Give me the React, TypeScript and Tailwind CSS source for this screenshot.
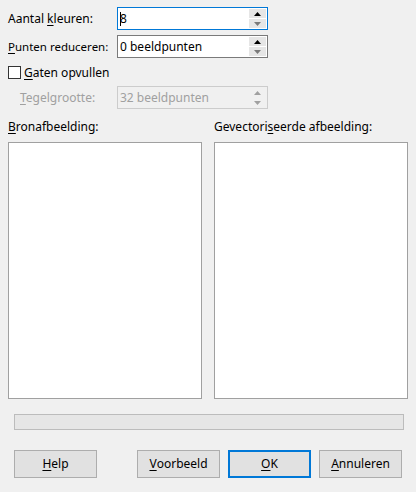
import React from 'react'

const font = { fontFamily: '"Noto Sans", "Open Sans", sans-serif' }

function U({ children }: { children: React.ReactNode }) {
  return <span className="underline underline-offset-2">{children}</span>
}

function Spin({ value, focused, disabled }: { value: React.ReactNode; focused?: boolean; disabled?: boolean }) {
  const border = focused ? 'border-[#0078d7]' : disabled ? 'border-[#cccccc]' : 'border-[#7a7a7a]'
  const arrow = disabled ? '#a0a0a0' : '#000000'
  return (
    <div className={`flex h-[23px] w-[151px] items-stretch border bg-white ${border}`}>
      <div className={`flex flex-1 items-center pl-[2px] text-[12px] ${disabled ? 'text-[#a0a0a0] bg-[#f0f0f0]' : 'text-black'}`}>
        {value}
      </div>
      <div className={`flex w-[18px] flex-col gap-[1px] py-[1px] pr-[1px] ${disabled ? 'bg-[#f0f0f0]' : ''}`}>
        <div className={`flex flex-1 items-center justify-center ${disabled ? 'bg-[#f0f0f0]' : 'bg-[#e6e6e6]'}`}>
          <svg width="7" height="4" viewBox="0 0 7 4"><path d="M0 4 L3.5 0 L7 4 Z" fill={arrow} /></svg>
        </div>
        <div className={`flex flex-1 items-center justify-center ${disabled ? 'bg-[#f0f0f0]' : 'bg-[#e6e6e6]'}`}>
          <svg width="7" height="4" viewBox="0 0 7 4"><path d="M0 0 L3.5 4 L7 0 Z" fill={disabled ? '#a0a0a0' : '#7a7a7a'} /></svg>
        </div>
      </div>
    </div>
  )
}

function Btn({ children, primary }: { children: React.ReactNode; primary?: boolean }) {
  return (
    <div
      className={`flex h-[28px] w-[83px] items-center justify-center bg-[#e1e1e1] text-[12px] text-black ${
        primary ? 'border-2 border-[#0078d7]' : 'border border-[#adadad]'
      }`}
    >
      {children}
    </div>
  )
}

export default function App() {
  return (
    <div className="flex h-[492px] w-[416px] flex-col bg-[#f0f0f0] text-[12px] text-black" style={font}>
      <div className="flex flex-col gap-[5px] pl-[8px] pt-[7px]">
        <div className="flex items-center">
          <span className="w-[109px]">Aantal <U>k</U>leuren:</span>
          <Spin
            focused
            value={
              <span className="flex items-center">
                <span className="mr-[-1px] h-[14px] w-[1px] bg-black" />
                8
              </span>
            }
          />
        </div>
        <div className="flex items-center">
          <span className="w-[109px] text-[11.5px]"><U>P</U>unten reduceren:</span>
          <Spin value="0 beeldpunten" />
        </div>
      </div>
      <div className="mt-[8px] flex h-[13px] items-center gap-[3px] pl-[8px]">
        <div className="h-[13px] w-[13px] border border-[#333333] bg-white" />
        <span><U>G</U>aten opvullen</span>
      </div>
      <div className="mt-[7px] flex items-center pl-[20px]">
        <span className="w-[97px] text-[#a0a0a0]"><U>T</U>egelgrootte:</span>
        <Spin disabled value="32 beeldpunten" />
      </div>
      <div className="mt-[10px] flex gap-[12px] px-[8px]">
        <div className="flex w-[194px] flex-col">
          <span className="h-[16px] leading-[16px]"><U>B</U>ronafbeelding:</span>
          <div className="mt-[7px] h-[257px] border border-[#a0a0a0] bg-white" />
        </div>
        <div className="flex w-[194px] flex-col">
          <span className="h-[16px] leading-[16px]">Gevectori<U>s</U>eerde afbeelding:</span>
          <div className="mt-[7px] h-[257px] border border-[#a0a0a0] bg-white" />
        </div>
      </div>
      <div className="mx-[14px] mt-[15px] h-[16px] w-[390px] border border-[#bcbcbc] bg-[#e6e6e6]" />
      <div className="mt-[20px] flex pl-[14px]">
        <Btn><U>H</U>elp</Btn>
        <div className="ml-[40px] flex gap-[8px]">
          <Btn><U>V</U>oorbeeld</Btn>
          <Btn primary><U>O</U>K</Btn>
          <Btn><U>A</U>nnuleren</Btn>
        </div>
      </div>
    </div>
  )
}
